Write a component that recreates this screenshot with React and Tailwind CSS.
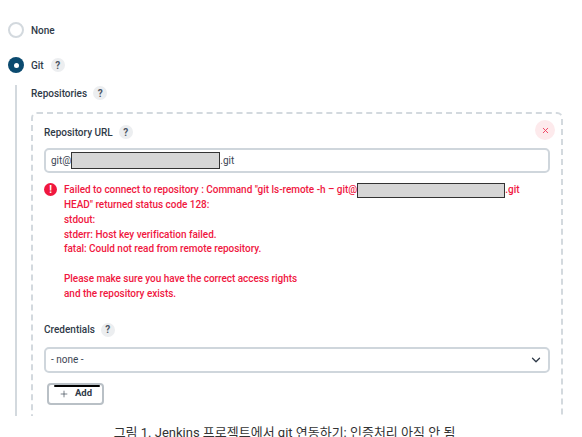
import { ChevronDown, Plus, X } from 'lucide-react';

function Help() {
  return (
    <span className="flex h-[14px] w-[14px] shrink-0 items-center justify-center rounded-full bg-[#eceef0] text-[10px] font-bold text-[#4b5563]">
      ?
    </span>
  );
}

function Label({ children, className = '' }) {
  return (
    <div className={`flex h-[16px] items-center gap-[6px] text-[10px] font-medium text-[#2f3a48] ${className}`}>
      <span>{children}</span>
      <Help />
    </div>
  );
}

function Redacted({ className }) {
  return <span className={`inline-block border border-[#333] bg-[#d6d6d6] align-middle ${className}`} />;
}

export default function App() {
  return (
    <div className="h-[437px] w-[582px] overflow-hidden bg-white font-['Roboto','Noto_Sans_CJK_KR',sans-serif]">
      <div className="h-[416px] overflow-hidden pl-[8px] pt-[22px]">
        <div className="flex h-[16px] items-center gap-[7px] text-[10px] font-medium text-[#2f3a48]">
          <span className="h-[16px] w-[16px] rounded-full border-2 border-[#d3d9de] bg-white" />
          <span>None</span>
        </div>

        <div className="mt-[19px] flex h-[16px] items-center gap-[7px] text-[10px] font-medium text-[#2f3a48]">
          <span className="flex h-[16px] w-[16px] items-center justify-center rounded-full bg-[#0b4a6f]">
            <span className="h-[5px] w-[5px] rounded-full bg-white" />
          </span>
          <span>Git</span>
          <Help />
        </div>

        <div className="ml-[7px] mt-[12px] border-l-2 border-[#d3d9de] pl-[14px]">
          <Label>Repositories</Label>

          <div className="mr-[19px] mt-[11px] rounded-md border-2 border-dashed border-[#d3d9de] pb-[40px] pl-[11px] pr-[11px] pt-[6px]">
            <div className="flex h-[20px] items-start justify-between">
              <Label className="mt-[4px]">Repository URL</Label>
              <span className="-mr-[5px] flex h-[20px] w-[20px] items-center justify-center rounded-full bg-[#fdeaec] text-[#f0405f]">
                <X size={9} strokeWidth={2.5} />
              </span>
            </div>

            <div className="mt-[8px] flex h-[25px] items-center rounded-[5px] border-2 border-[#cfd6dc] pl-[5px] text-[10px] text-[#3b4654]">
              git@<Redacted className="h-[17px] w-[149px]" />.git
            </div>

            <div className="mt-[10px] flex gap-[7px] whitespace-nowrap text-[10px] font-medium leading-[14.8px] tracking-[-0.03px] text-[#f0183f]">
              <span className="flex h-[13px] w-[13px] shrink-0 items-center justify-center rounded-full bg-[#f0183f] text-[10px] font-bold leading-none text-white">
                !
              </span>
              <div>
                Failed to connect to repository : Command "git ls-remote -h – git@
                <Redacted className="h-[15px] w-[148px]" />
                .git
                <br />
                HEAD" returned status code 128:
                <br />
                stdout:
                <br />
                stderr: Host key verification failed.
                <br />
                fatal: Could not read from remote repository.
                <br />
                <br />
                Please make sure you have the correct access rights
                <br />
                and the repository exists.
              </div>
            </div>

            <Label className="mt-[20px]">Credentials</Label>

            <div className="mt-[9px] flex h-[26px] items-center justify-between rounded-[5px] border-2 border-[#cfd6dc] pl-[5px] pr-[5px] text-[10px] text-[#3b4654]">
              <span>- none -</span>
              <ChevronDown size={14} strokeWidth={2.2} className="text-[#2f3a48]" />
            </div>

            <button className="relative ml-[3px] mt-[10px] flex h-[22px] w-[57px] items-center justify-center gap-[6px] rounded-[4px] border-2 border-[#b9c0c6] text-[9.5px] font-bold text-[#2f3a48]">
              <span className="absolute left-[5px] right-[2px] top-0 h-[2px] rounded-full bg-black" />
              <Plus size={10} strokeWidth={1.5} />
              <span>Add</span>
            </button>
          </div>
        </div>
      </div>

      <p className="mt-[9px] pr-[13px] text-center text-[13px] leading-[16px] text-[#333]">
        그림 1. Jenkins 프로젝트에서 git 연동하기: 인증처리 아직 안 됨
      </p>
    </div>
  );
}
